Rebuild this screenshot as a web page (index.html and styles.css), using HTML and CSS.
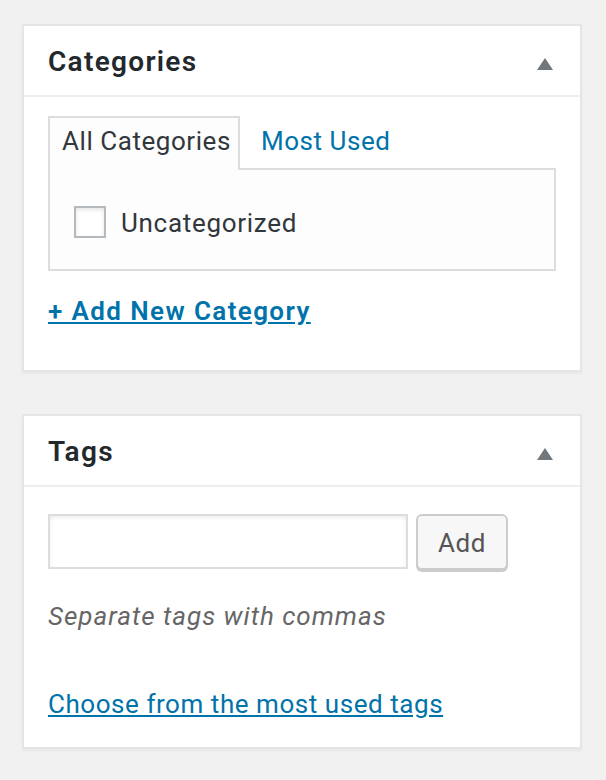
FILE: index.html
```html
<!DOCTYPE html>
<html lang="en">
<head>
<meta charset="utf-8">
<title>Categories and Tags</title>
<link rel="stylesheet" href="styles.css">
</head>
<body>
<div class="page">
  <div class="postbox">
    <div class="hndle">
      <h2 class="title">Categories</h2>
      <span class="toggle"><svg width="16" height="12" viewBox="0 0 16 12"><path d="M8 0 L16 12 L0 12 Z" fill="#72777c"/></svg></span>
    </div>
    <div class="inside cat-inside">
      <ul class="tabs">
        <li class="tab active">All Categories</li>
        <li class="tab other"><a href="#">Most Used</a></li>
      </ul>
      <div class="panel">
        <label class="cat-row"><input type="checkbox" class="cb"><span class="cat-label">Uncategorized</span></label>
      </div>
      <p class="add-new"><a href="#">+ Add New Category</a></p>
    </div>
  </div>

  <div class="postbox">
    <div class="hndle">
      <h2 class="title">Tags</h2>
      <span class="toggle"><svg width="16" height="12" viewBox="0 0 16 12"><path d="M8 0 L16 12 L0 12 Z" fill="#72777c"/></svg></span>
    </div>
    <div class="inside tag-inside">
      <div class="tag-row">
        <input type="text" class="tag-input">
        <button type="button" class="btn">Add</button>
      </div>
      <p class="howto">Separate tags with commas</p>
      <p class="cloud"><a href="#">Choose from the most used tags</a></p>
    </div>
  </div>
</div>
</body>
</html>
```

FILE: styles.css
```css
html, body {
  margin: 0;
  padding: 0;
}
body {
  background: #f1f1f1;
  font-family: Roboto, "Liberation Sans", sans-serif;
  color: #444;
}
.page {
  padding: 24px 24px 0 22px;
}
.postbox {
  width: 560px;
  box-sizing: border-box;
  background: #fff;
  border: 2px solid #e5e5e5;
  box-shadow: 0 2px 2px rgba(0, 0, 0, 0.04);
  margin-bottom: 42px;
}
.hndle {
  display: flex;
  justify-content: space-between;
  align-items: flex-start;
  padding: 18px 24px 15px 24px;
  border-bottom: 2px solid #eee;
}
.title {
  margin: 0;
  font-size: 28px;
  line-height: 36px;
  font-weight: 600;
  letter-spacing: 1.3px;
  color: #23282d;
}
.toggle {
  display: block;
  width: 16px;
  height: 12px;
  margin-top: 14px;
  margin-right: 3px;
}
.toggle svg {
  display: block;
}
.inside {
  padding: 0 24px;
  font-size: 26px;
  line-height: 36px;
  letter-spacing: 0.55px;
}
.cat-inside {
  padding-top: 19px;
  padding-bottom: 41px;
}
.tabs {
  list-style: none;
  margin: 0;
  padding: 0;
  display: flex;
  position: relative;
  z-index: 1;
  margin-bottom: -2px;
}
.tab {
  padding: 6px 7px 12px 12px;
  line-height: 34px;
  border: 2px solid transparent;
  border-bottom: 0;
}
.tab.active {
  border-color: #ddd;
  background: #fdfdfd;
  color: #32373c;
}
.tab.other {
  margin-left: 7px;
}
a {
  color: #0073aa;
}
.tab a {
  text-decoration: none;
}
.panel {
  border: 2px solid #ddd;
  background: #fdfdfd;
  padding: 34px 24px 28px 24px;
}
.cat-row {
  display: flex;
  align-items: flex-start;
}
.cb {
  appearance: none;
  -webkit-appearance: none;
  margin: 2px 0 0 0;
  width: 32px;
  height: 32px;
  box-sizing: border-box;
  border: 2px solid #b4b9be;
  background: #fff;
  box-shadow: inset 0 2px 4px rgba(0, 0, 0, 0.1);
}
.cat-label {
  margin-left: 15px;
  padding-top: 1px;
  line-height: 36px;
  letter-spacing: 0.7px;
  color: #32373c;
}
.add-new {
  margin: 22px 0 0 0;
  font-weight: 600;
  letter-spacing: 1.4px;
}
.add-new a {
  text-decoration: underline;
}
.tag-inside {
  padding-top: 27px;
  padding-bottom: 25px;
}
.tag-row {
  display: flex;
  align-items: flex-start;
}
.tag-input {
  width: 360px;
  height: 55px;
  box-sizing: border-box;
  margin: 0;
  border: 2px solid #ddd;
  box-shadow: inset 0 2px 4px rgba(0, 0, 0, 0.07);
  background: #fff;
  font-size: 26px;
}
.btn {
  width: 92px;
  height: 56px;
  box-sizing: border-box;
  margin: 0 0 0 8px;
  padding: 1px 0 0 0;
  border: 2px solid #ccc;
  border-radius: 6px;
  background: #f7f7f7;
  box-shadow: 0 2px 0 #ccc;
  color: #555;
  font-family: Roboto, "Liberation Sans", sans-serif;
  font-size: 26px;
  line-height: 50px;
  letter-spacing: 0.6px;
}
.howto {
  margin: 28px 0 0 0;
  font-style: italic;
  letter-spacing: 1px;
  color: #666;
}
.cloud {
  margin: 52px 0 0 0;
}
```
